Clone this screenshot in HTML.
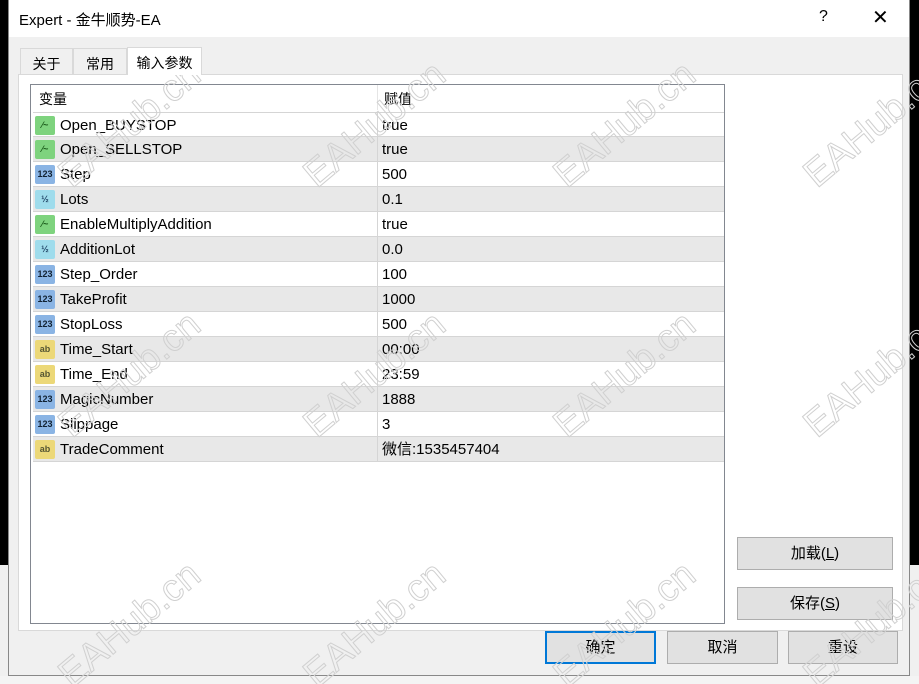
<!DOCTYPE html>
<html style="width:919px;height:684px;overflow:hidden"><head><meta charset="utf-8"><style>
*{margin:0;padding:0;box-sizing:border-box}
body{width:919px;height:684px;position:relative;overflow:hidden;background:#000;font-family:"Liberation Sans","Noto Sans CJK SC",sans-serif;color:#000}
.abs{position:absolute}
#dlg{left:8px;top:0;width:902px;height:676px;background:#f0f0f0;border:1px solid #888;border-top:none}
#title{left:0;top:0;width:900px;height:37px;background:#fff}
.tab{position:absolute;top:48px;height:26px;font-size:14px;padding:5px 0 0 0;text-align:center;border:1px solid #d9d9d9;border-bottom:none;background:#f0f0f0}
#panel{left:18px;top:74px;width:885px;height:557px;background:#fff;border:1px solid #d9d9d9}
#list{left:30px;top:84px;width:695px;height:540px;background:#fff;border:1px solid #828790}
.row{position:absolute;left:2px;width:691px;height:25px;border-bottom:1px solid #d5d5d5;font-size:15px;line-height:17px}
.row.g{background:#e8e8e8}
.row .n{position:absolute;left:27px;top:4px}
.row .v{position:absolute;left:349px;top:4px}
.row .d{position:absolute;left:344px;top:0;width:1px;height:25px;background:#d5d5d5}
.ic{position:absolute;left:2px;top:3px;width:20px;height:19px;border-radius:2px;font-size:9px;font-weight:bold;text-align:center;line-height:18px}
.btn{position:absolute;height:33px;background:#e1e1e1;border:1px solid #adadad;font-size:15px;text-align:center;line-height:31px}
.wm{position:absolute;width:0;height:0}
.wm span{position:absolute;left:0;top:0;font-size:38px;font-family:"Liberation Sans",sans-serif;color:transparent;-webkit-text-stroke:1px #d0d0d0;transform:translate(-50%,-50%) rotate(-40deg);white-space:nowrap}
</style></head><body>
<div class="abs" style="left:0;top:565px;width:8px;height:119px;background:#f0f0f0"></div>
<div class="abs" style="left:910px;top:565px;width:9px;height:119px;background:#f0f0f0"></div>
<div class="abs" style="left:0;top:676px;width:919px;height:8px;background:#f4f4f4"></div>
<div id="dlg" class="abs">
 <div id="title" class="abs"><span class="abs" style="left:10px;top:9px;font-size:15px">Expert - 金牛顺势-EA</span>
 <span class="abs" style="left:810px;top:8px;font-size:16px">?</span>
 <span class="abs" style="left:863px;top:5px;font-size:20px;font-weight:300">✕</span></div>
</div>
<div class="tab" style="left:20px;width:53px">关于</div>
<div class="tab" style="left:73px;width:54px">常用</div>
<div class="tab" style="left:127px;width:75px;top:47px;height:28px;background:#fff;z-index:2">输入参数</div>
<div id="panel" class="abs"></div>
<div id="list" class="abs">
 <div class="row" style="top:0;border-bottom:none;font-size:14px"><span class="n" style="left:6px;top:6px">变量</span><span class="v" style="left:351px;top:6px">赋值</span><span class="d" style="background:#e5e5e5"></span></div>
</div>
<script>
var R=[["Open_BUYSTOP","true","b"],["Open_SELLSTOP","true","b"],["Step","500","i"],["Lots","0.1","f"],["EnableMultiplyAddition","true","b"],["AdditionLot","0.0","f"],["Step_Order","100","i"],["TakeProfit","1000","i"],["StopLoss","500","i"],["Time_Start","00:00","s"],["Time_End","23:59","s"],["MagicNumber","1888","i"],["Slippage","3","i"],["TradeComment","微信:1535457404","s"]];
var L=document.getElementById('list'),h='';
var ic={b:['#7ed37e','#1a5a1a','⁄~'],i:['#8ab4e4','#123','123'],f:['#9fdcec','#246','½'],s:['#ecd878','#553','ab']};
R.forEach(function(r,k){var c=ic[r[2]];h+='<div class="row'+(k%2?' g':'')+'" style="top:'+(27+k*25)+'px;border-top:'+(k==0?'1px solid #d5d5d5':'none')+'"><span class="ic" style="background:'+c[0]+';color:'+c[1]+'">'+c[2]+'</span><span class="n">'+r[0]+'</span><span class="d"></span><span class="v">'+r[1]+'</span></div>';});
L.innerHTML+=h;
</script>
<div class="btn" style="left:737px;top:537px;width:156px">加载(<u>L</u>)</div>
<div class="btn" style="left:737px;top:587px;width:156px">保存(<u>S</u>)</div>
<div class="btn" style="left:545px;top:631px;width:111px;border:2px solid #0078d7;line-height:29px">确定</div>
<div class="btn" style="left:667px;top:631px;width:111px">取消</div>
<div class="btn" style="left:788px;top:631px;width:110px">重设</div>
<script>
var w='';[125,375,625].forEach(function(y){[130,375,625,875].forEach(function(x){w+='<div class="wm" style="left:'+x+'px;top:'+y+'px"><span>EAHub.cn</span></div>';});});
document.body.insertAdjacentHTML('beforeend',w);
</script>
</body></html>
